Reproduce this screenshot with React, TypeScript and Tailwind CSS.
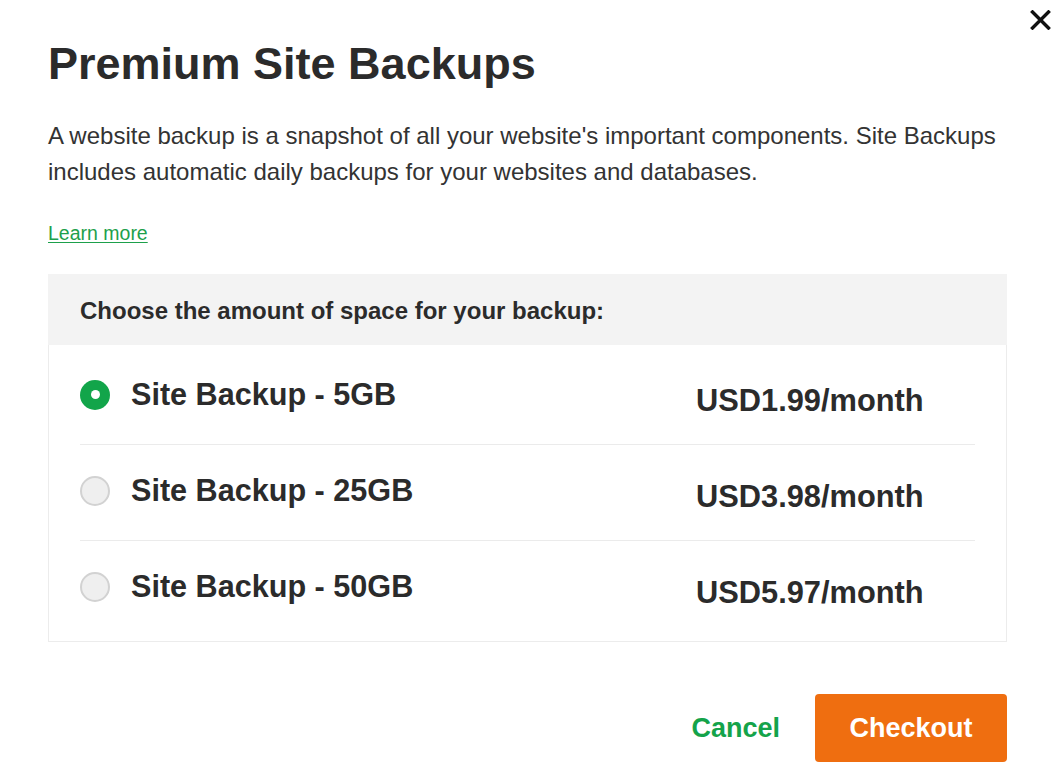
import React, { useState } from 'react';

const plans = [
  { id: '5', label: 'Site Backup - 5GB', price: 'USD1.99/month' },
  { id: '25', label: 'Site Backup - 25GB', price: 'USD3.98/month' },
  { id: '50', label: 'Site Backup - 50GB', price: 'USD5.97/month' },
];

const Radio: React.FC<{ checked: boolean }> = ({ checked }) =>
  checked ? (
    <span className="w-[30px] h-[30px] rounded-full bg-[#12a54a] flex items-center justify-center shrink-0">
      <span className="w-[9px] h-[9px] rounded-full bg-white"></span>
    </span>
  ) : (
    <span className="w-[30px] h-[30px] rounded-full bg-[#efefef] border-2 border-[#d2d2d2] shrink-0"></span>
  );

const App: React.FC = () => {
  const [selected, setSelected] = useState('5');

  return (
    <div
      className="relative w-full min-h-screen bg-white text-[#2b2b2b]"
      style={{ fontFamily: '"Liberation Sans", Arial, sans-serif' }}
    >
      {/* Close */}
      <button className="absolute top-[10px] right-[5px] w-[21px] h-[20px] flex items-center justify-center">
        <svg width="21" height="20" viewBox="0 0 21 20" fill="none">
          <path d="M2.5 2 L18.5 18 M18.5 2 L2.5 18" stroke="#111" strokeWidth="3.4" strokeLinecap="square" />
        </svg>
      </button>

      <div className="pl-[48px] pr-[49px] pt-[38px] pb-[13px]">
        <h1 className="text-[45px] leading-[52px] font-bold">Premium Site Backups</h1>

        <p className="mt-[28px] text-[24px] leading-[36px] text-[#333]">
          A website backup is a snapshot of all your website's important components. Site Backups
          <br />
          includes automatic daily backups for your websites and databases.
        </p>

        <a href="#" className="block mt-[31px] text-[19.5px] leading-[24px] text-[#1da04b] underline underline-offset-2">
          Learn more
        </a>

        {/* Plan picker */}
        <div className="mt-[29px]">
          <div className="h-[71px] bg-[#f3f3f3] flex items-center pt-[2px] px-[32px] text-[24px] font-bold">
            Choose the amount of space for your backup:
          </div>
          <div className="border-x border-b border-[#ececec] px-[31px] pt-[4px] pb-[4px]">
            {plans.map((p, i) => (
              <div
                key={p.id}
                onClick={() => setSelected(p.id)}
                className={`h-[96px] pb-[4px] flex items-center cursor-pointer ${i < plans.length - 1 ? 'border-b border-[#ebebeb]' : ''}`}
              >
                <Radio checked={selected === p.id} />
                <span className="flex-1 ml-[21px] text-[30.6px] font-bold">{p.label}</span>
                <span className="w-[279px] mt-[13px] text-[30.8px] font-bold">{p.price}</span>
              </div>
            ))}
          </div>
        </div>

        {/* Footer actions */}
        <div className="mt-[52px] flex justify-end items-center gap-[35px]">
          <button className="text-[27px] font-bold text-[#14a34a]">Cancel</button>
          <button className="h-[68px] w-[192px] rounded-[4px] bg-[#ef6e10] text-white text-[27px] font-bold">
            Checkout
          </button>
        </div>
      </div>
    </div>
  );
};

export default App;
